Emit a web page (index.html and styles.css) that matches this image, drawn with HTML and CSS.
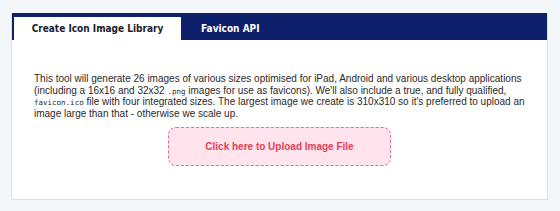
FILE: index.html
```html
<!DOCTYPE html>
<html>
<head>
<meta charset="utf-8">
<link rel="stylesheet" href="styles.css">
</head>
<body>
<div class="card">
  <div class="tabs">
    <div class="tab active">Create Icon Image Library</div>
    <div class="tab">Favicon API</div>
  </div>
  <div class="panel">
    <p class="desc">This tool will generate 26 images of various sizes optimised for iPad, Android and various desktop applications (including a 16x16 and 32x32 <code>.png</code> images for use as favicons). We'll also include a true, and fully qualified, <code>favicon.ico</code> file with four integrated sizes. The largest image we create is 310x310 so it's preferred to upload an image large than that - otherwise we scale up.</p>
    <div class="upload-row">
      <div class="upload">Click here to Upload Image File</div>
    </div>
  </div>
</div>
</body>
</html>
```

FILE: styles.css
```css
html, body {
  margin: 0;
  padding: 0;
  background: #f4f7fa;
}
body {
  padding: 13px 12px 12px 11px;
}
.card {
  background: #ffffff;
  border: 1px solid #dcdfe3;
  border-top: none;
  height: 187px;
  box-sizing: border-box;
}
.tabs {
  background: #0f206a;
  height: 27px;
  display: flex;
  align-items: flex-end;
  padding-left: 2px;
}
.tab {
  font-family: "DejaVu Sans Condensed", "DejaVu Sans", Verdana, sans-serif;
  font-weight: bold;
  font-size: 10px;
  color: #ffffff;
  height: 23px;
  line-height: 23px;
  padding: 0 20px;
  box-sizing: border-box;
  white-space: nowrap;
}
.tab.active {
  background: #ffffff;
  color: #1b1b2b;
  width: 167px;
  text-align: center;
  padding: 0;
}
.panel {
  padding: 33px 22px 0 22px;
}
.desc {
  margin: 0;
  font-family: "Liberation Sans", Arial, sans-serif;
  font-size: 10px;
  line-height: 11.5px;
  color: #2a2a2a;
}
code {
  font-family: "DejaVu Sans Mono", monospace;
  font-size: 7.5px;
  line-height: 1;
}
.upload-row {
  display: flex;
  justify-content: center;
  margin-top: 8px;
}
.upload {
  width: 223px;
  height: 39px;
  box-sizing: border-box;
  border: 1.5px dashed #e0709a;
  border-radius: 8px;
  background: #ffe4ed;
  color: #e0405a;
  font-family: "Liberation Sans", Arial, sans-serif;
  font-weight: bold;
  font-size: 10px;
  display: flex;
  align-items: center;
  justify-content: center;
}
```
